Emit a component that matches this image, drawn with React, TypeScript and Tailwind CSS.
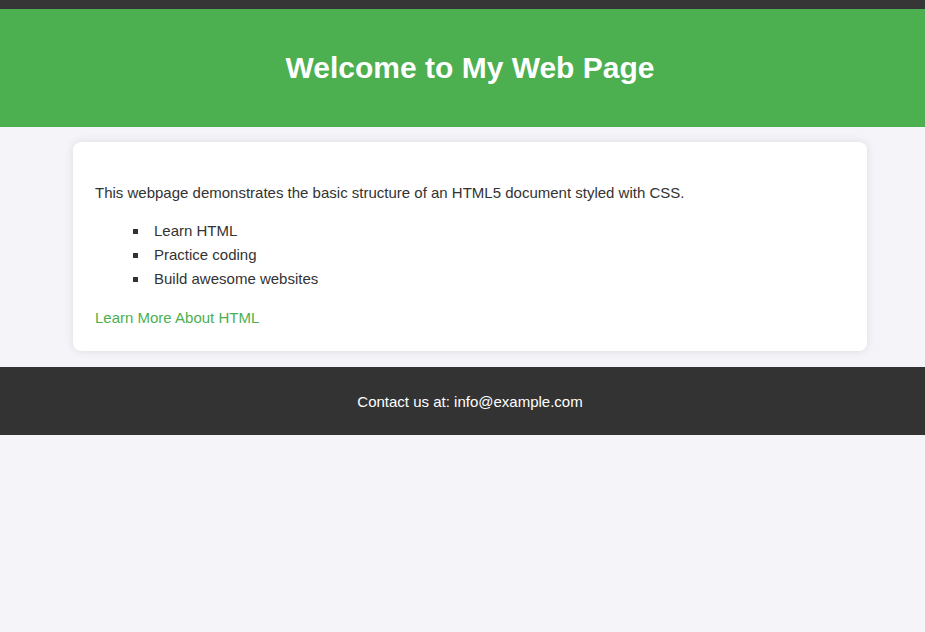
const ITEMS = ["Learn HTML", "Practice coding", "Build awesome websites"];

const App = () => {
  return (
    <div className="min-h-screen w-full overflow-hidden bg-[#f4f4f9] font-['Liberation_Sans',Arial,sans-serif] text-[#333]">
      <div className="w-[940px]">
        <div className="h-[9px] bg-[#363636]" />
        <header className="flex h-[118px] items-center justify-center bg-[#4caf50]">
          <h1 className="text-[30px] font-bold leading-[36px] text-white">
            Welcome to My Web Page
          </h1>
        </header>
        <main className="mx-auto mt-[15px] w-[794px] rounded-lg bg-white px-[22px] pb-[21px] pt-[21px] shadow-[0_0_10px_rgba(0,0,0,0.1)]">
          <p className="mt-[18px] text-[15px] leading-6">
            This webpage demonstrates the basic structure of an HTML5 document
            styled with CSS.
          </p>
          <ul className="mt-[14px] list-[square] pl-[54px] text-[15px] leading-6">
            {ITEMS.map((item, key) => (
              <li key={key} className="pl-[5px]">
                {item}
              </li>
            ))}
          </ul>
          <a href="#" className="mt-[15px] block text-[15px] leading-6 text-[#4caf50]">
            Learn More About HTML
          </a>
        </main>
        <footer className="mt-4 flex h-[68px] items-center justify-center bg-[#333] pt-[2px] text-[15px] text-white">
          <p>Contact us at: info@example.com</p>
        </footer>
      </div>
    </div>
  );
};

export default App;
